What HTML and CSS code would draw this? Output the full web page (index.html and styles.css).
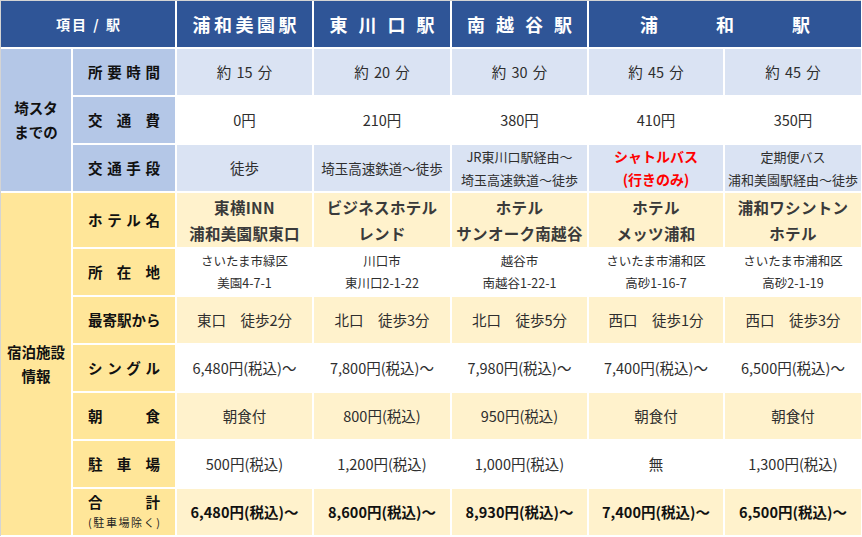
FILE: index.html
```html
<!DOCTYPE html>
<html lang="ja">
<head>
<meta charset="utf-8">
<title>埼スタまでのアクセスと宿泊施設</title>
<link rel="stylesheet" href="styles.css">
</head>
<body>
<div class="frame">
  <div class="grid">
    <!-- header -->
    <div class="cell hd hd-item span2"><span class="hd-small">項目 / 駅</span></div>
    <div class="cell hd"><span class="hd-st sp1">浦和美園駅</span></div>
    <div class="cell hd"><span class="hd-st sp2">東川口駅</span></div>
    <div class="cell hd"><span class="hd-st sp2">南越谷駅</span></div>
    <div class="cell hd span2 hd-wide"><span>浦</span><span>和</span><span>駅</span></div>

    <!-- access section -->
    <div class="cell lb-b group span-r3"><div>埼スタ</div><div>までの</div></div>
    <div class="cell lb-b"><div class="lbl"><span>所</span><span>要</span><span>時</span><span>間</span></div></div>
    <div class="cell d-b time">約 15 分</div>
    <div class="cell d-b time">約 20 分</div>
    <div class="cell d-b time">約 30 分</div>
    <div class="cell d-b time">約 45 分</div>
    <div class="cell d-b time">約 45 分</div>

    <div class="cell lb-b"><div class="lbl"><span>交</span><span>通</span><span>費</span></div></div>
    <div class="cell d-w">0円</div>
    <div class="cell d-w">210円</div>
    <div class="cell d-w">380円</div>
    <div class="cell d-w">410円</div>
    <div class="cell d-w">350円</div>

    <div class="cell lb-b"><div class="lbl"><span>交</span><span>通</span><span>手</span><span>段</span></div></div>
    <div class="cell d-b">徒歩</div>
    <div class="cell d-b route1">埼玉高速鉄道～徒歩</div>
    <div class="cell d-b route"><div>JR東川口駅経由～</div><div>埼玉高速鉄道～徒歩</div></div>
    <div class="cell d-b route red"><div>シャトルバス</div><div>(行きのみ)</div></div>
    <div class="cell d-b route"><div>定期便バス</div><div>浦和美園駅経由～徒歩</div></div>

    <!-- hotel section -->
    <div class="cell lb-y group span-r7"><div>宿泊施設</div><div>情報</div></div>
    <div class="cell lb-y"><div class="lbl"><span>ホ</span><span>テ</span><span>ル</span><span>名</span></div></div>
    <div class="cell d-y hotel"><div>東横INN</div><div>浦和美園駅東口</div></div>
    <div class="cell d-y hotel"><div>ビジネスホテル</div><div>レンド</div></div>
    <div class="cell d-y hotel"><div>ホテル</div><div>サンオーク南越谷</div></div>
    <div class="cell d-y hotel"><div>ホテル</div><div>メッツ浦和</div></div>
    <div class="cell d-y hotel"><div>浦和ワシントン</div><div>ホテル</div></div>

    <div class="cell lb-y"><div class="lbl"><span>所</span><span>在</span><span>地</span></div></div>
    <div class="cell d-w addr"><div>さいたま市緑区</div><div>美園4-7-1</div></div>
    <div class="cell d-w addr"><div>川口市</div><div>東川口2-1-22</div></div>
    <div class="cell d-w addr"><div>越谷市</div><div>南越谷1-22-1</div></div>
    <div class="cell d-w addr"><div>さいたま市浦和区</div><div>高砂1-16-7</div></div>
    <div class="cell d-w addr"><div>さいたま市浦和区</div><div>高砂2-1-19</div></div>

    <div class="cell lb-y"><div class="lbl"><span>最</span><span>寄</span><span>駅</span><span>か</span><span>ら</span></div></div>
    <div class="cell d-y">東口　徒歩2分</div>
    <div class="cell d-y">北口　徒歩3分</div>
    <div class="cell d-y">北口　徒歩5分</div>
    <div class="cell d-y">西口　徒歩1分</div>
    <div class="cell d-y">西口　徒歩3分</div>

    <div class="cell lb-y"><div class="lbl"><span>シ</span><span>ン</span><span>グ</span><span>ル</span></div></div>
    <div class="cell d-w">6,480円(税込)～</div>
    <div class="cell d-w">7,800円(税込)～</div>
    <div class="cell d-w">7,980円(税込)～</div>
    <div class="cell d-w">7,400円(税込)～</div>
    <div class="cell d-w">6,500円(税込)～</div>

    <div class="cell lb-y"><div class="lbl"><span>朝</span><span>食</span></div></div>
    <div class="cell d-y">朝食付</div>
    <div class="cell d-y">800円(税込)</div>
    <div class="cell d-y">950円(税込)</div>
    <div class="cell d-y">朝食付</div>
    <div class="cell d-y">朝食付</div>

    <div class="cell lb-y"><div class="lbl"><span>駐</span><span>車</span><span>場</span></div></div>
    <div class="cell d-w">500円(税込)</div>
    <div class="cell d-w">1,200円(税込)</div>
    <div class="cell d-w">1,000円(税込)</div>
    <div class="cell d-w">無</div>
    <div class="cell d-w">1,300円(税込)</div>

    <div class="cell lb-y total-lbl">
      <div class="lbl"><span>合</span><span>計</span></div>
      <div class="lbl lbl-sm"><span>(</span><span>駐</span><span>車</span><span>場</span><span>除</span><span>く</span><span>)</span></div>
    </div>
    <div class="cell d-y total">6,480円(税込)～</div>
    <div class="cell d-y total">8,600円(税込)～</div>
    <div class="cell d-y total">8,930円(税込)～</div>
    <div class="cell d-y total">7,400円(税込)～</div>
    <div class="cell d-y total">6,500円(税込)～</div>
  </div>
</div>
</body>
</html>
```

FILE: styles.css
```css
html, body {
  margin: 0;
  padding: 0;
  background: #ffffff;
}

body {
  font-family: "Noto Sans CJK JP", "Noto Sans", sans-serif;
  width: 862px;
  height: 537px;
  overflow: hidden;
}

.frame {
  border-top: 1px solid #d4d4d4;
  border-left: 1px solid #d4d4d4;
  width: 861px;
  height: 536px;
  box-sizing: border-box;
}

.grid {
  display: grid;
  grid-template-columns: 70px 102px 135px 136px 135px 134px 136px;
  grid-template-rows: 46px 46px 46px 46px 54px 46px 46px 46px 46px 46px 46px;
  gap: 2px;
  background: #ffffff;
}

.cell {
  display: flex;
  flex-direction: column;
  align-items: center;
  justify-content: center;
  text-align: center;
  font-size: 14.5px;
  line-height: 22px;
  color: #2e2e2e;
  white-space: nowrap;
}

.span2 { grid-column: span 2; }
.span-r3 { grid-row: span 3; }
.span-r7 { grid-row: span 7; }

/* header */
.hd {
  background: #2f5597;
  color: #ffffff;
  font-weight: bold;
}

.hd-small {
  font-size: 14px;
  letter-spacing: 2px;
  padding-left: 2px;
}

.hd-st {
  font-size: 18px;
  line-height: 24px;
}

.sp1 { letter-spacing: 3.5px; padding-left: 3.5px; }
.sp2 { letter-spacing: 11px; padding-left: 11px; }

.hd-wide {
  flex-direction: row;
  justify-content: space-between;
  padding: 0 51px;
  font-size: 18px;
  line-height: 24px;
}

/* group labels */
.group {
  font-weight: bold;
  color: #111111;
  font-size: 14.5px;
  line-height: 24px;
}

.lb-b { background: #b4c7e7; }
.lb-y { background: #ffe699; }
.d-b { background: #dae3f3; }
.d-w { background: #ffffff; }
.d-y { background: #fff2cc; }

.lbl {
  width: 72px;
  display: flex;
  justify-content: space-between;
  font-weight: bold;
  color: #111111;
  font-size: 14.5px;
  line-height: 20px;
}

.lbl-sm {
  font-size: 11px;
  font-weight: normal;
  color: #222222;
  line-height: 20px;
}

.total-lbl {
  justify-content: center;
}

.time {
  word-spacing: 2px;
}

.route1 {
  font-size: 13.5px;
}

.route {
  font-size: 13px;
  line-height: 23px;
}

.red {
  color: #ff0000;
  font-weight: bold;
  font-size: 14px;
}

.hotel {
  font-weight: bold;
  font-size: 15.5px;
  letter-spacing: 0.3px;
  line-height: 26px;
  color: #3a3a3a;
}

.addr {
  font-size: 12.5px;
  line-height: 22px;
}

.total {
  font-weight: bold;
  color: #111111;
}
```
